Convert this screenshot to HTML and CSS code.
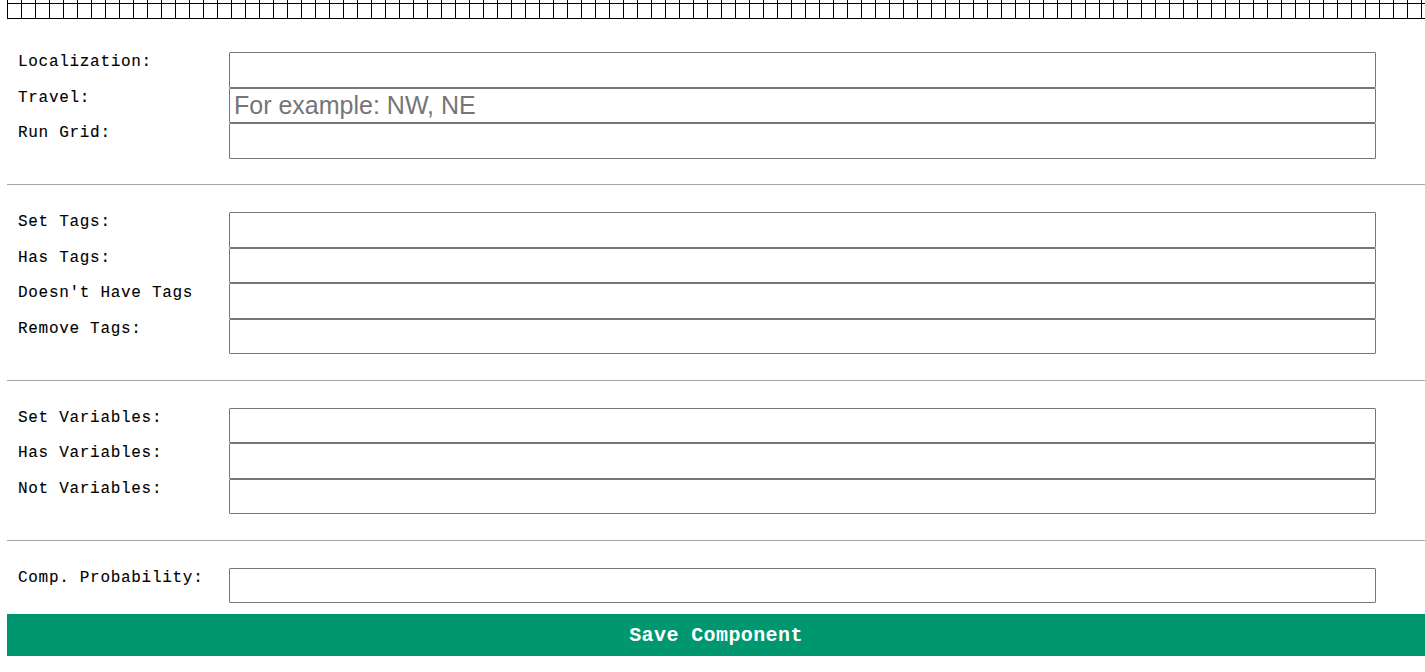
FILE: index.html
```html
<!DOCTYPE html>
<html>
<head>
<meta charset="utf-8">
<link rel="stylesheet" href="styles.css">
</head>
<body>
<div class="grid-strip"></div>
<form class="form">
  <div class="section first">
    <div class="row"><label class="label">Localization:</label><input class="field" type="text"></div>
    <div class="row"><label class="label">Travel:</label><input class="field" type="text" placeholder="For example: NW, NE"></div>
    <div class="row"><label class="label">Run Grid:</label><input class="field" type="text"></div>
  </div>
  <hr class="divider">
  <div class="section">
    <div class="row"><label class="label">Set Tags:</label><input class="field" type="text"></div>
    <div class="row"><label class="label">Has Tags:</label><input class="field" type="text"></div>
    <div class="row"><label class="label">Doesn't Have Tags</label><input class="field" type="text"></div>
    <div class="row"><label class="label">Remove Tags:</label><input class="field" type="text"></div>
  </div>
  <hr class="divider">
  <div class="section">
    <div class="row"><label class="label">Set Variables:</label><input class="field" type="text"></div>
    <div class="row"><label class="label">Has Variables:</label><input class="field" type="text"></div>
    <div class="row"><label class="label">Not Variables:</label><input class="field" type="text"></div>
  </div>
  <hr class="divider">
  <div class="section">
    <div class="row"><label class="label">Comp. Probability:</label><input class="field" type="text"></div>
  </div>
  <button class="save" type="button">Save Component</button>
</form>
</body>
</html>
```

FILE: styles.css
```css
html, body {
  margin: 0;
  padding: 0;
  background: #fff;
  overflow: hidden;
}
body {
  padding-left: 7px;
  font-family: "Liberation Mono", "Courier New", monospace;
}
.grid-strip {
  height: 19px;
  width: 1430px;
  background-image:
    linear-gradient(to right, #000 1px, transparent 1px),
    linear-gradient(to bottom, #000 1px, transparent 1px);
  background-size: 14px 15px, 14px 15px;
  background-position: 0 0, 0 3px;
}
.form {
  margin-top: 33px;
  width: 1418px;
}
.row {
  display: grid;
  grid-template-columns: 222px 1147px;
  align-items: start;
}
.label {
  padding-left: 11px;
  padding-top: 1px;
  font-size: 16px;
  letter-spacing: 0.7px;
  line-height: 18px;
  color: #000;
  -webkit-text-stroke: 0.1px #000;
}
.field {
  box-sizing: border-box;
  height: 35.5px;
  width: 1147px;
  margin: 0;
  border: 1px solid #767676;
  border-radius: 1px;
  padding: 1px 4px;
  font-family: "Liberation Sans", Arial, sans-serif;
  font-size: 25px;
  background: #fff;
  outline: none;
}
.field::placeholder {
  color: #757575;
}
.divider {
  margin: 25.5px 0 27px;
  border: 0;
  border-top: 1px solid #a6a6a6;
  height: 0;
}
.save {
  display: block;
  margin-top: 11px;
  width: 1418px;
  height: 42px;
  border: 0;
  background: #009670;
  color: #fff;
  font-family: "Liberation Mono", "Courier New", monospace;
  font-weight: bold;
  font-size: 20px;
  letter-spacing: 0.4px;
  cursor: pointer;
}
```
